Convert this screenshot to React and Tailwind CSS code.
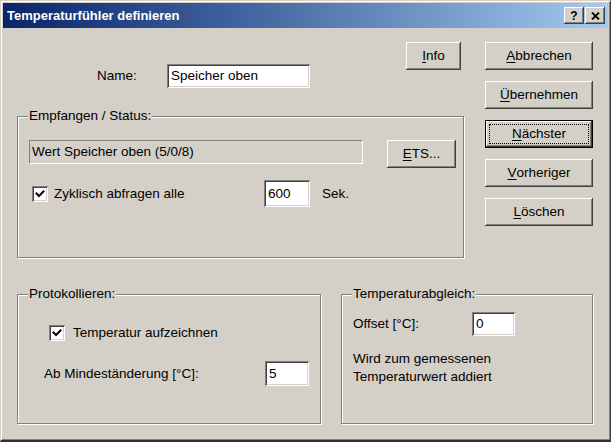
import React from "react";

const raised =
  "shadow-[inset_-1px_-1px_0_#404040,inset_1px_1px_0_#ffffff,inset_-2px_-2px_0_#808080]";
const sunken =
  "shadow-[inset_1px_1px_0_#808080,inset_-1px_-1px_0_#ffffff,inset_2px_2px_0_#404040,inset_-2px_-2px_0_#d4d0c8]";

const U = ({ children }) => (
  <span className="underline underline-offset-2 decoration-1">{children}</span>
);

const Btn = ({ children, className = "", def = false }) => {
  if (def) {
    return (
      <button
        className={`flex h-[28px] border border-black bg-[#d4d0c8] p-[3px] ${raised} ${className}`}
      >
        <span className="flex flex-1 items-center justify-center border border-dotted border-black">
          {children}
        </span>
      </button>
    );
  }
  return (
    <button
      className={`flex h-[28px] items-center justify-center bg-[#d4d0c8] ${raised} ${className}`}
    >
      {children}
    </button>
  );
};

const Field = ({ value, className = "" }) => (
  <div className={`flex items-center bg-white pl-[4px] ${sunken} ${className}`}>
    {value}
  </div>
);

const Check = () => (
  <div className={`flex h-[16px] w-[16px] shrink-0 items-center justify-center bg-white ${sunken}`}>
    <svg width="10" height="10" viewBox="0 0 10 10">
      <path d="M1.5 4.5 L4 7 L8.5 2.5" fill="none" stroke="#000" strokeWidth="2" strokeLinecap="square" />
    </svg>
  </div>
);

const Group = ({ title, className = "", children }) => (
  <div
    className={`relative border border-[#808080] shadow-[inset_1px_1px_0_#ffffff,1px_1px_0_#ffffff] ${className}`}
  >
    <span className="absolute left-[10px] top-[-9px] bg-[#d4d0c8] px-[1px] leading-[15px]">
      {title}
    </span>
    {children}
  </div>
);

export default function App() {
  return (
    <div className="h-[442px] w-[611px] bg-[#d4d0c8] font-['Liberation_Sans',Arial,sans-serif] text-[13.5px] leading-[16px] text-black">
      <div className="flex h-full w-full flex-col border border-b-2 border-t-[#d4d0c8] border-l-[#d4d0c8] border-r-[#404040] border-b-[#303030] p-[2px] shadow-[inset_1px_1px_0_#ffffff,inset_-1px_-1px_0_#808080]">
        {/* title bar */}
        <div className="flex h-[25px] shrink-0 items-center bg-gradient-to-r from-[#0a246a] to-[#a6caf0] pl-[4px] pr-[3px]">
          <span className="text-[13px] font-bold text-white">Temperaturfühler definieren</span>
          <div className="ml-auto flex gap-[1px]">
            <div className={`flex h-[17px] w-[20px] items-center justify-center bg-[#d4d0c8] text-[12px] font-bold ${raised}`}>
              ?
            </div>
            <div className={`flex h-[17px] w-[20px] items-center justify-center bg-[#d4d0c8] ${raised}`}>
              <svg width="9" height="8" viewBox="0 0 9 8">
                <path d="M1 0.5 L8 7.5 M8 0.5 L1 7.5" stroke="#000" strokeWidth="1.8" />
              </svg>
            </div>
          </div>
        </div>

        {/* top section */}
        <div className="flex">
          <div className="ml-[14px] w-[447px]">
            <div className="flex items-start pt-[14px]">
              <div className="ml-[80px] mt-[22px] flex items-center">
                <span className="w-[70px]">Name:</span>
                <Field value="Speicher oben" className="h-[24px] w-[143px]" />
              </div>
              <Btn className="ml-auto mr-[3px] w-[55px]">
                <U>I</U>nfo
              </Btn>
            </div>

            <Group title="Empfangen / Status:" className="mt-[28px] h-[142px]">
              <div className="flex items-start pl-[11px] pr-[7px] pt-[23px]">
                <div className="flex h-[24px] w-[334px] items-center border border-t-[#808080] border-l-[#808080] border-r-white border-b-white pl-[2px]">
                  Wert Speicher oben (5/0/8)
                </div>
                <Btn className="ml-auto w-[69px]">
                  <U>E</U>TS...
                </Btn>
              </div>
              <div className="mt-[12px] flex items-center pl-[14px]">
                <Check />
                <span className="ml-[6px] w-[210px]">Zyklisch abfragen alle</span>
                <Field value="600" className="h-[27px] w-[46px]" />
                <span className="ml-[12px]">Sek.</span>
              </div>
            </Group>
          </div>

          <div className="ml-[21px] flex w-[108px] flex-col gap-[11px] pt-[14px]">
            <Btn className="w-full">
              <U>A</U>bbrechen
            </Btn>
            <Btn className="w-full">
              <U>Ü</U>bernehmen
            </Btn>
            <Btn def className="w-full">
              <U>N</U>ächster
            </Btn>
            <Btn className="w-full">
              <U>V</U>orheriger
            </Btn>
            <Btn className="w-full">
              <U>L</U>öschen
            </Btn>
          </div>
        </div>

        {/* bottom section */}
        <div className="mt-[36px] flex">
          <Group title="Protokollieren:" className="ml-[14px] h-[130px] w-[304px]">
            <div className="flex items-center pl-[31px] pt-[30px]">
              <Check />
              <span className="ml-[8px]">Temperatur aufzeichnen</span>
            </div>
            <div className="mt-[20px] flex items-center pl-[26px]">
              <span className="w-[221px]">Ab Mindeständerung [°C]:</span>
              <Field value="5" className="h-[25px] w-[44px]" />
            </div>
          </Group>

          <Group title="Temperaturabgleich:" className="ml-[20px] h-[130px] w-[252px]">
            <div className="flex items-center pl-[11px] pt-[17px]">
              <span className="w-[119px]">Offset [°C]:</span>
              <Field value="0" className="h-[24px] w-[43px]" />
            </div>
            <div className="mt-[14px] pl-[11px] leading-[18px]">
              <div>Wird zum gemessenen</div>
              <div>Temperaturwert addiert</div>
            </div>
          </Group>
        </div>
      </div>
    </div>
  );
}
